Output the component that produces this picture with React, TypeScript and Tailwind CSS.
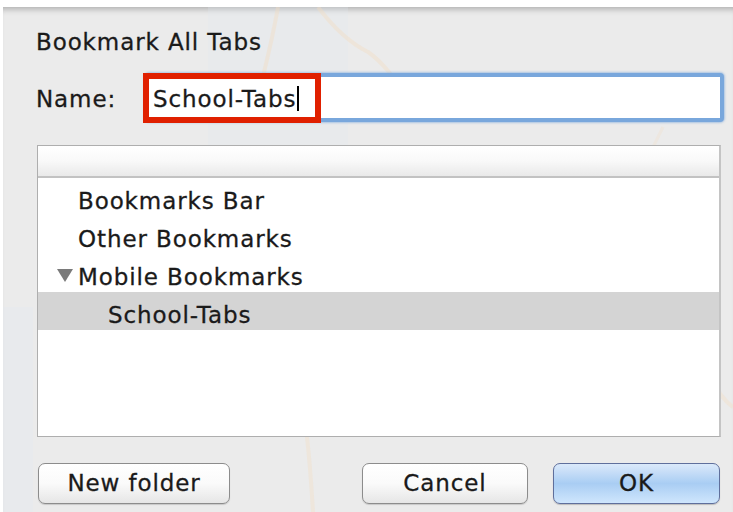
import { useState } from 'react';

const font = { fontFamily: '"DejaVu Sans", "Liberation Sans", sans-serif' };

type Folder = { name: string; depth: number; open?: boolean };

const folders: Folder[] = [
  { name: 'Bookmarks Bar', depth: 0 },
  { name: 'Other Bookmarks', depth: 0 },
  { name: 'Mobile Bookmarks', depth: 0, open: true },
  { name: 'School-Tabs', depth: 1 },
];

// faint map showing through the translucent sheet
function MapBackdrop() {
  return (
    <svg className="absolute inset-0 pointer-events-none" width="730" height="505" viewBox="0 0 730 505">
      <rect x="205" y="0" width="140" height="140" fill="#dfe6f0" opacity="0.25" />
      <rect x="0" y="300" width="30" height="205" fill="#e2e8f0" opacity="0.35" />
      <path d="M275 0 C 268 40, 262 60, 255 90" stroke="#f3dcc0" strokeWidth="4" fill="none" opacity="0.4" />
      <path d="M315 0 C 330 20, 345 35, 365 45 C 380 55, 395 75, 410 100" stroke="#f3dcc0" strokeWidth="4" fill="none" opacity="0.4" />
      <path d="M280 340 C 300 380, 305 420, 310 505" stroke="#f3dcc0" strokeWidth="4" fill="none" opacity="0.35" />
      <path d="M660 120 C 640 160, 620 200, 610 250" stroke="#f3dcc0" strokeWidth="3" fill="none" opacity="0.25" />
      <path d="M690 330 C 700 360, 715 390, 730 400" stroke="#f3dcc0" strokeWidth="4" fill="none" opacity="0.35" />
    </svg>
  );
}

export default function App() {
  const [selected, setSelected] = useState('School-Tabs');
  const name = 'School-Tabs';

  return (
    <div className="w-[733px] h-[512px] bg-white pt-[7px] pl-[3px] overflow-hidden" style={font}>
      <div className="relative h-full bg-[#ebebeb] shadow-[inset_0_7px_6px_-5px_rgba(0,0,0,0.28)] text-[23px] text-[#1a1a1a] tracking-[0.9px] [-webkit-text-stroke:0.3px_#1a1a1a]">
        <MapBackdrop />

        <div className="relative">
          <h1 className="ml-[33px] pt-[22px] leading-[26px] font-normal">Bookmark All Tabs</h1>

          {/* name field */}
          <div className="flex items-center h-[50px] mt-[18px]">
            <label className="ml-[33px] w-[107px] leading-none pt-[2px]">Name:</label>
            <div className="relative flex-none w-[581px] h-[50px]">
              <div className="absolute left-[2px] right-0 top-0 bottom-[1px] rounded-[4px] border-[4px] border-[#79a7dc] bg-white shadow-[0_0_2px_1px_rgba(110,160,220,0.5)]" />
              <div className="absolute left-0 top-0 w-[178px] h-[50px] border-[6px] border-[#e02000] bg-white flex items-center pl-[4px] overflow-hidden">
                <span className="leading-none pt-[2px] whitespace-nowrap">{name}</span>
                <span className="ml-[1px] w-[2px] h-[25px] bg-black flex-none" />
              </div>
            </div>
          </div>

          {/* folder tree */}
          <div className="ml-[34px] mt-[22px] w-[684px] h-[292px] border border-[#aeaeae] border-r-2 border-r-[#c4c4c4] bg-white flex flex-col">
            <div className="h-[32px] flex-none bg-gradient-to-b from-white via-[#f9f9f9] to-[#e9e9e9] border-b-2 border-[#c2c2c2]" />
            {folders.map((f) => (
              <div
                key={f.name}
                onClick={() => setSelected(f.name)}
                className={`h-[38px] flex items-center pt-[5px] ${selected === f.name ? 'bg-[#d4d4d4]' : ''}`}
              >
                <div className={`flex items-center ${f.depth === 1 ? 'pl-[70px]' : 'pl-[18px]'}`}>
                  {f.depth === 0 && (
                    <span className="w-[22px] flex-none">
                      {f.open && (
                        <svg width="18" height="15" viewBox="0 0 18 15">
                          <path d="M1 1 H17 L9 14 Z" fill="#7a7a7a" />
                        </svg>
                      )}
                    </span>
                  )}
                  <span className="leading-none pt-[3px]">{f.name}</span>
                </div>
              </div>
            ))}
          </div>

          {/* actions */}
          <div className="flex mt-[26px] ml-[35px] w-[682px] h-[41px]">
            <button className="w-[192px] rounded-[7px] border border-[#8c8c8c] bg-gradient-to-b from-white via-[#fafafa] to-[#e6e6e6] shadow-[0_1px_1px_rgba(0,0,0,0.15)] leading-none">
              New folder
            </button>
            <button className="ml-auto w-[166px] rounded-[7px] border border-[#8c8c8c] bg-gradient-to-b from-white via-[#fafafa] to-[#e6e6e6] shadow-[0_1px_1px_rgba(0,0,0,0.15)] leading-none">
              Cancel
            </button>
            <button className="ml-[25px] w-[167px] rounded-[7px] border border-[#5f6f9c] bg-gradient-to-b from-[#dbe9fa] via-[#a9cdf3] to-[#cfe6fd] shadow-[0_1px_1px_rgba(0,0,0,0.2)] leading-none">
              OK
            </button>
          </div>
        </div>
      </div>
    </div>
  );
}
